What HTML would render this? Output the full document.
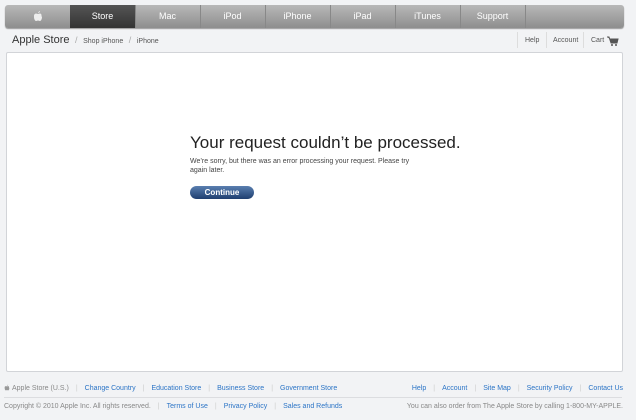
<!DOCTYPE html>
<html><head><style>
body{margin:0;width:636px;height:420px;background:#f2f3f5;font-family:"Liberation Sans",sans-serif;position:relative;overflow:hidden}
.nav{position:absolute;left:5px;top:5px;width:619px;height:23px;border-radius:3px;background:linear-gradient(#b8b8b8,#8e8e8e);box-shadow:0 1px 1px #999}
.nav div{position:absolute;top:0;height:23px;width:65px;text-align:center;line-height:23px;color:#fff;font-size:9px;border-right:1px solid #888}
.nav .on{background:linear-gradient(#555,#333)}
.a{position:absolute;white-space:nowrap}
.box{position:absolute;left:6px;top:52px;width:615px;height:318px;background:#fff;border:1px solid #d2d4d8;border-radius:2px}
.f{font-size:7px;color:#2b74c6;line-height:9px}
.g{color:#888}
.sep{color:#ccc;padding:0 7px}
</style></head><body>
<div class="nav">
<div style="left:0"><svg width="10" height="12" viewBox="0 0 10 12" style="margin-top:5px"><path d="M5 3C6 1 7 1 7 1C7 2 6 3 5 3ZM2 4C3 3 4 4 5 4C6 4 7 3 8 4C9 5 8 6 9 7C9 9 8 11 7 11C6 11 6 10.5 5 10.5C4 10.5 4 11 3 11C2 11 1 9 1 7C1 5 1 4.5 2 4Z" fill="#eee"/></svg></div>
<div class="on" style="left:65px">Store</div>
<div style="left:130px">Mac</div>
<div style="left:195px">iPod</div>
<div style="left:260px">iPhone</div>
<div style="left:325px">iPad</div>
<div style="left:390px">iTunes</div>
<div style="left:455px">Support</div>
</div>
<div class="a" style="left:12px;top:34px;font-size:11px;color:#333">Apple Store <span style="color:#aaa;font-size:9px">&nbsp;/&nbsp;</span> <span style="font-size:7px;color:#555">Shop iPhone</span> <span style="color:#aaa;font-size:9px">&nbsp;/&nbsp;</span> <span style="font-size:7px;color:#555">iPhone</span></div>
<div class="a" style="left:517px;top:32px;height:16px;border-left:1px solid #ddd"></div>
<div class="a" style="left:525px;top:37px;font-size:7px;color:#555">Help</div>
<div class="a" style="left:546px;top:32px;height:16px;border-left:1px solid #ddd"></div>
<div class="a" style="left:553px;top:37px;font-size:7px;color:#555">Account</div>
<div class="a" style="left:583px;top:32px;height:16px;border-left:1px solid #ddd"></div>
<div class="a" style="left:591px;top:37px;font-size:7px;color:#555">Cart</div>
<svg class="a" style="left:607px;top:36px" width="12" height="10"><path d="M0 1H2L4 7H10L11 3H3" stroke="#555" fill="#555"/><circle cx="5" cy="9" r="1" fill="#555"/><circle cx="9" cy="9" r="1" fill="#555"/></svg>
<div class="box"></div>
<div class="a" style="left:190px;top:133px;font-size:17px;color:#222">Your request couldn’t be processed.</div>
<div class="a" style="left:190px;top:157px;font-size:7px;color:#444;line-height:9px">We’re sorry, but there was an error processing your request. Please try<br>again later.</div>
<div class="a" style="left:190px;top:186px;width:64px;height:13px;border-radius:7px;background:linear-gradient(#5a7fb0,#1f3f70);color:#fff;font-size:8px;font-weight:bold;text-align:center;line-height:13px">Continue</div>
<svg class="a" style="left:4px;top:384px" width="6" height="7" viewBox="0 0 10 12"><path d="M5 3C6 1 7 1 7 1C7 2 6 3 5 3ZM2 4C3 3 4 4 5 4C6 4 7 3 8 4C9 5 8 6 9 7C9 9 8 11 7 11C6 11 6 10.5 5 10.5C4 10.5 4 11 3 11C2 11 1 9 1 7C1 5 1 4.5 2 4Z" fill="#999"/></svg>
<div class="a f" style="left:12px;top:384px"><span class="g">Apple Store (U.S.)</span><span class="sep">|</span>Change Country<span class="sep">|</span>Education Store<span class="sep">|</span>Business Store<span class="sep">|</span>Government Store</div>
<div class="a f" style="right:13px;top:384px">Help<span class="sep">|</span>Account<span class="sep">|</span>Site Map<span class="sep">|</span>Security Policy<span class="sep">|</span>Contact Us</div>
<div class="a" style="left:4px;top:397px;width:618px;border-top:1px solid #dcdde0"></div>
<div class="a f" style="left:4px;top:402px"><span class="g">Copyright © 2010 Apple Inc. All rights reserved.</span><span class="sep">|</span>Terms of Use<span class="sep">|</span>Privacy Policy<span class="sep">|</span>Sales and Refunds</div>
<div class="a f g" style="right:13px;top:402px">You can also order from The Apple Store by calling 1-800-MY-APPLE.</div>
</body></html>
